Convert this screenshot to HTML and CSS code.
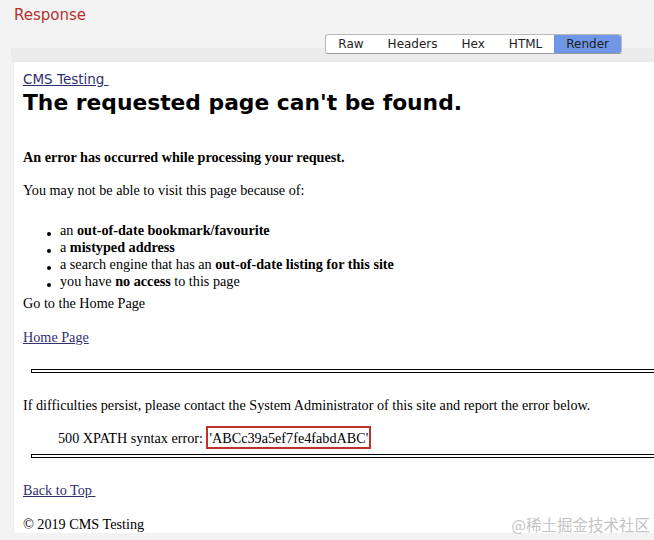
FILE: index.html
```html
<!DOCTYPE html>
<html>
<head>
<meta charset="utf-8">
<link rel="stylesheet" href="styles.css">
</head>
<body>
<div class="app">
  <div class="title">Response</div>
  <div class="toolbar">
    <div class="tabs">
      <span class="tab">Raw</span>
      <span class="tab">Headers</span>
      <span class="tab">Hex</span>
      <span class="tab">HTML</span>
      <span class="tab active">Render</span>
    </div>
  </div>
  <div class="panel">
    <a class="site" href="#">CMS Testing&nbsp;</a>
    <h1 class="headline">The requested page can't be found.</h1>
    <p class="lead">An error has occurred while processing your request.</p>
    <p class="intro">You may not be able to visit this page because of:</p>
    <ul class="reasons">
      <li>an <b>out-of-date bookmark/favourite</b></li>
      <li>a <b>mistyped address</b></li>
      <li>a search engine that has an <b>out-of-date listing for this site</b></li>
      <li>you have <b>no access</b> to this page</li>
    </ul>
    <p class="goto">Go to the Home Page</p>
    <p class="home"><a href="#">Home Page</a></p>
    <hr class="rule rule-top">
    <p class="persist">If difficulties persist, please contact the System Administrator of this site and report the error below.</p>
    <p class="err">500 XPATH syntax error: <span class="errbox">'ABCc39a5ef7fe4fabdABC'</span></p>
    <hr class="rule rule-bottom">
    <p class="back"><a href="#">Back to Top&nbsp;</a></p>
    <div class="footer">
      <span>© 2019 CMS Testing</span>
      <span class="wm">@稀土掘金技术社区</span>
    </div>
  </div>
</div>
</body>
</html>
```
FILE: styles.css
```css
html, body {
  margin: 0;
  padding: 0;
}
body {
  width: 654px;
  height: 540px;
  overflow: hidden;
  background: #f3f3f3;
}
.app {
  display: flex;
  flex-direction: column;
}
.title {
  font-family: "DejaVu Sans", sans-serif;
  font-size: 15px;
  line-height: 18px;
  color: #b3312f;
  padding: 6px 0 0 14px;
}
.toolbar {
  margin: 10px 0 0 11px;
  height: 28px;
  background: linear-gradient(to bottom, transparent 14px, #ebebeb 14px);
  display: flex;
  justify-content: flex-end;
  padding-right: 32px;
}
.tabs {
  display: flex;
  height: 20px;
  box-sizing: border-box;
  border: 1px solid #b9b9b9;
  border-bottom-color: #9a9a9a;
  border-radius: 3px;
  background: #fff;
  overflow: hidden;
}
.tab {
  font-family: "DejaVu Sans", sans-serif;
  font-size: 12px;
  line-height: 18px;
  color: #1e1e1e;
  padding: 0 12px;
}
.tab.active {
  background: #6f96e7;
  border-top-right-radius: 3px;
}
.panel {
  margin-left: 13px;
  background: #fff;
  padding: 9px 0 0 10px;
  font-family: "Liberation Serif", serif;
  font-size: 14.2px;
  line-height: 17px;
  color: #000;
  box-shadow: inset 1px 0 0 #ececec;
}
a {
  color: #2f2f70;
  text-decoration: underline;
}
.site {
  display: block;
  font-family: "DejaVu Sans", sans-serif;
  font-size: 13.5px;
  line-height: 17px;
  width: max-content;
}
.headline {
  margin: 1px 0 0;
  font-family: "DejaVu Sans", sans-serif;
  font-weight: bold;
  font-size: 21.8px;
  line-height: 28px;
  color: #000;
}
p {
  margin: 0;
}
.lead {
  margin-top: 31.5px;
  font-weight: bold;
}
.intro {
  margin-top: 16px;
}
.reasons {
  list-style: none;
  margin: 23px 0 0;
  padding: 0 0 0 24px;
}
.reasons li::before {
  content: "";
  display: inline-block;
  width: 4px;
  height: 4px;
  border-radius: 50%;
  background: #000;
  margin-right: 9px;
  vertical-align: -1px;
}
.goto {
  margin-top: 5px;
}
.home {
  margin-top: 17px;
}
.rule {
  margin: 0 0 0 8px;
  height: 2px;
  border: 1px solid #000;
  border-right: none;
  background: #fff;
}
.rule-top {
  margin-top: 23px;
}
.persist {
  margin-top: 24px;
}
.err {
  margin-top: 16px;
  padding-left: 35px;
}
.errbox {
  border: 2px solid #c0302b;
  padding: 1.5px 1px;
}
.rule-bottom {
  margin-top: 7px;
}
.back {
  margin-top: 24.5px;
}
.footer {
  margin-top: 17px;
  display: flex;
  justify-content: space-between;
  align-items: center;
  padding-right: 4px;
}
.wm {
  font-family: "Noto Sans CJK SC", sans-serif;
  font-size: 15.5px;
  line-height: 17px;
  color: #c4c4c4;
}
```
